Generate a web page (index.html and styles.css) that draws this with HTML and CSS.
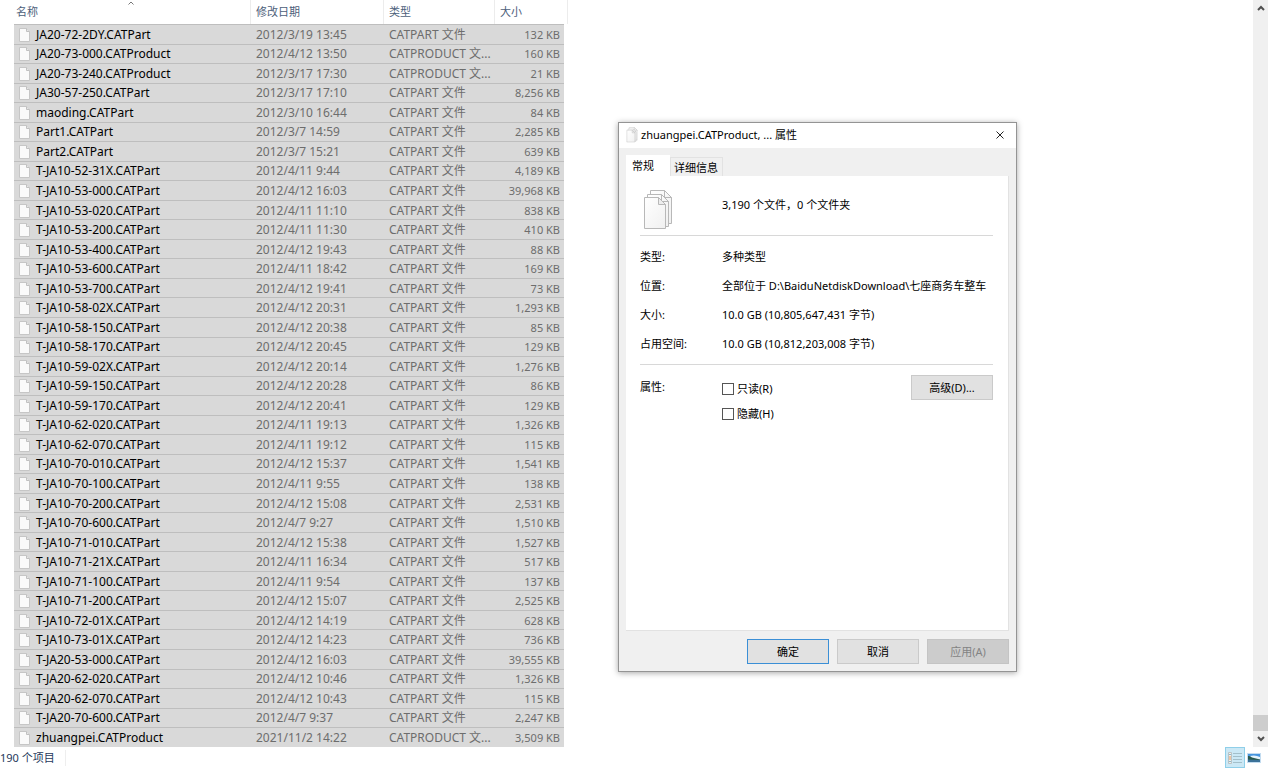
FILE: index.html
```html
<!DOCTYPE html>
<html lang="zh-CN">
<head>
<meta charset="utf-8">
<title>属性</title>
<link rel="stylesheet" href="styles.css">
</head>
<body>
<div class="explorer">
  <div class="content">
    <div class="list">
      <table class="files">
        <colgroup><col class="col-name"><col class="col-date"><col class="col-type"><col class="col-size"></colgroup>
        <thead>
          <tr>
            <th class="name" scope="col">名称<svg class="sort" viewBox="0 0 6 4"><path d="M0.5 3.5 L3 1 L5.5 3.5"/></svg></th>
            <th scope="col">修改日期</th>
            <th scope="col">类型</th>
            <th class="last" scope="col">大小</th>
          </tr>
        </thead>
        <tbody id="rows"></tbody>
      </table>
    </div>
    <div class="scrollbar">
      <button class="arrow" type="button" aria-label="向上滚动"><svg viewBox="0 0 8 6"><path d="M1 5 L4 2 L7 5"/></svg></button>
      <div class="track"><div class="thumb"></div></div>
      <button class="arrow" type="button" aria-label="向下滚动"><svg viewBox="0 0 8 6"><path d="M1 1 L4 4 L7 1"/></svg></button>
    </div>
  </div>
  <footer class="status">
    <span class="count">190 个项目</span>
    <div class="views">
      <button class="view active" type="button" aria-label="详细信息">
        <svg width="14" height="12" viewBox="0 0 14 12"><path d="M0.5 0.5h3v11h-3z" fill="#f4efe8" stroke="#b9c3c6"/><path d="M1 2.5h2M1 9.5h2" stroke="#8fb7c9"/><path d="M1 5h2M1 7h2" stroke="#e39a63"/><path d="M5 1.5h9M5 4.5h9M5 7.5h9M5 10.5h9" stroke="#a3bfca"/></svg>
      </button>
      <button class="view" type="button" aria-label="大缩略图">
        <svg width="14" height="10" viewBox="0 0 14 10"><path d="M0 0h14v10H0z" fill="#c3dcf0"/><path d="M1 1h12v3H1z" fill="#4795de"/><path d="M3 3q4-1 7 0l3 1v2H5z" fill="#e5f3fb"/><path d="M1 3q2-.5 4 1.500l8 2V7H1z" fill="#29594d"/><path d="M1 6.500l12 .5v2H1z" fill="#3c7298"/></svg>
      </button>
    </div>
  </footer>
</div>

<section class="dialog" role="dialog" aria-labelledby="dialog-title">
  <header class="titlebar">
    <svg class="title-icon" viewBox="0 0 36 42"><use href="#pages"/></svg>
    <h1 class="title" id="dialog-title">zhuangpei.CATProduct, ... 属性</h1>
    <button class="close" type="button" aria-label="关闭"><svg viewBox="0 0 8 8"><path d="M0.500 0.500 L7.500 7.500 M7.500 0.500 L0.500 7.500"/></svg></button>
  </header>
  <div class="dialog-body">
    <div class="tabs" role="tablist">
      <button class="tab selected" type="button" role="tab" aria-selected="true">常规</button>
      <button class="tab" type="button" role="tab" aria-selected="false">详细信息</button>
    </div>
    <div class="panel" role="tabpanel">
      <div class="summary">
        <svg class="pages-icon" viewBox="0 0 36 42">
          <defs>
            <linearGradient id="paper" x1="0" y1="0" x2="1" y2="1"><stop offset="0" stop-color="#fff"/><stop offset="1" stop-color="#f0f0f0"/></linearGradient>
            <g id="pages" fill="url(#paper)" stroke="#b8b8b8" stroke-linejoin="round">
              <path d="M10.500 1.500h14l7 7v26h-21z"/>
              <path d="M24.500 1.500v7h7z"/>
              <path d="M7.500 5.500h14l7 7v25h-21z"/>
              <path d="M21.500 5.500v7h7z"/>
              <path d="M4.500 8.500h14l7 7v24h-21z"/>
              <path d="M18.500 8.500v7h7z" fill="#ededed"/>
            </g>
          </defs>
          <use href="#pages"/>
        </svg>
        <span>3,190 个文件，0 个文件夹</span>
      </div>
      <dl class="details">
        <dt>类型:</dt><dd>多种类型</dd>
        <dt>位置:</dt><dd>全部位于 D:\BaiduNetdiskDownload\七座商务车整车</dd>
        <dt>大小:</dt><dd>10.0 GB (10,805,647,431 字节)</dd>
        <dt>占用空间:</dt><dd>10.0 GB (10,812,203,008 字节)</dd>
      </dl>
      <div class="attributes">
        <span class="attr-label">属性:</span>
        <div class="checks">
          <label class="check"><input type="checkbox">只读(R)</label>
          <label class="check"><input type="checkbox">隐藏(H)</label>
        </div>
        <button class="button" type="button">高级(D)...</button>
      </div>
    </div>
    <div class="actions">
      <button class="button primary" type="button">确定</button>
      <button class="button" type="button">取消</button>
      <button class="button" type="button" disabled>应用(A)</button>
    </div>
  </div>
</section>
<script src="files.js"></script>
</body>
</html>
```
FILE: styles.css
```css
* { box-sizing: border-box; }

body {
  margin: 0;
  background: #fff;
  color: #000;
  font: 11px/16px "Noto Sans", "Noto Sans CJK SC", sans-serif;
}

button { font: inherit; color: inherit; padding: 0; border: 0; background: none; }
svg { display: block; }

.explorer { display: flex; flex-direction: column; height: 100vh; overflow: hidden; }
.content { display: flex; flex: 1; min-height: 0; }
.list { flex: 1; min-width: 0; padding-left: 14px; }

.files { width: 550px; height: 100%; table-layout: fixed; border-collapse: separate; border-spacing: 0; }
.col-name { width: 237px; }
.col-date { width: 133px; }
.col-type { width: 111px; }
.col-size { width: 69px; }

.files th {
  position: relative;
  height: 24px;
  padding: 0 0 0 5px;
  border-right: 1px solid #ececec;
  color: #4c607a;
  font-weight: 400;
  text-align: left;
}
.files th.name { padding-left: 2px; }
.files th.last { border-right: 0; }
.files th.last::after {
  content: "";
  position: absolute;
  top: 0;
  right: -4px;
  bottom: 0;
  width: 1px;
  background: #ececec;
}
.sort { position: absolute; top: 1px; left: 114px; width: 6px; height: 4px; fill: none; stroke: #777; }

.files td {
  padding: 1px 4px 0 5px;
  border-top: 1px solid #bebebe;
  background: #d9d9d9;
  color: #6d6d6d;
  font-size: 12px;
  line-height: 16px;
  overflow: hidden;
  text-overflow: ellipsis;
  white-space: nowrap;
}
.files td.name { color: #000; }
.files td.type { padding-right: 0; }
.files td.size { font-size: 11px; text-align: right; }
.file { display: flex; align-items: center; gap: 6px; }
.file-icon { flex: none; width: 11px; height: 14px; }

.scrollbar { display: flex; flex-direction: column; width: 15px; background: #f0f0f0; }
.arrow { display: grid; place-items: center; height: 16px; }
.arrow svg { width: 8px; height: 6px; fill: none; stroke: #505050; stroke-width: 2; }
.track { display: flex; flex: 1; flex-direction: column; justify-content: flex-end; }
.thumb { height: 16px; background: #cdcdcd; }

.status { display: flex; align-items: center; justify-content: space-between; height: 21px; color: #1e395b; }
.count { padding-right: 10px; border-right: 1px solid #eee; }
.views { display: flex; align-self: stretch; padding-right: 5px; }
.view { display: grid; place-items: center; width: 18px; }
.view.active { width: 20px; border: 1px solid #8fcfe9; background: #cbe8f5; }

.dialog {
  position: absolute;
  top: 122px;
  left: 618px;
  display: flex;
  flex-direction: column;
  width: 399px;
  height: 550px;
  border: 1px solid #949494;
  background: #f0f0f0;
  box-shadow: 0 1px 6px rgba(0, 0, 0, .35);
}
.titlebar { display: flex; align-items: center; gap: 2px; height: 25px; padding: 0 12px 2px 6px; background: #fff; }
.title-icon { width: 14px; height: 16px; }
.title { flex: 1; margin: 0; font-size: 11px; font-weight: 400; }
.close { width: 8px; height: 8px; }
.close svg { width: 8px; height: 8px; fill: none; stroke: #222; }

.dialog-body { display: flex; flex: 1; flex-direction: column; padding: 7px 7px 7px 6px; }
.tabs { display: flex; align-items: flex-end; padding-left: 1px; }
.tab { height: 19px; padding: 2px 4px 0 3px; border: 1px solid #e2e2e2; border-bottom: 0; background: #f0f0f0; }
.tab.selected { height: 21px; padding: 0 16px 0 6px; border: 0; background: #fff; }
.panel { flex: 1; padding: 13px 15px 0 14px; margin-left: 1px; border: 1px solid #e2e2e2; border-width: 0 1px 1px 0; background: #fff; }
.summary { display: flex; gap: 46px; height: 47px; border-bottom: 1px solid #d8d8d8; }
.summary span { padding-top: 8px; }
.pages-icon { width: 36px; height: 42px; }

.details {
  display: grid;
  grid-template-columns: 82px 1fr;
  row-gap: 13px;
  margin: 0;
  padding: 13px 0 12px;
  border-bottom: 1px solid #d8d8d8;
}
.details dd { margin: 0; overflow: hidden; white-space: nowrap; }
.attributes { display: flex; align-items: flex-start; padding-top: 10px; }
.attr-label { width: 82px; padding-top: 4px; }
.checks { display: flex; flex: 1; flex-direction: column; gap: 9px; padding-top: 6px; }
.check { display: flex; align-items: center; gap: 3px; }
.check input { appearance: none; width: 12px; height: 12px; margin: 0; border: 1px solid #555; background: #fff; }

.button { width: 82px; height: 25px; border: 1px solid #cacaca; background: #e1e1e1; }
.button.primary { border-color: #3b8fd6; }
.button:disabled { background: #ccc; border-color: #c4c4c4; color: #838383; }
.actions { display: flex; justify-content: flex-end; gap: 8px; padding-top: 8px; }
```
FILE: files.js
```javascript
const files = `JA20-72-2DY.CATPart|2012/3/19 13:45|132
JA20-73-000.CATProduct|2012/4/12 13:50|160
JA20-73-240.CATProduct|2012/3/17 17:30|21
JA30-57-250.CATPart|2012/3/17 17:10|8,256
maoding.CATPart|2012/3/10 16:44|84
Part1.CATPart|2012/3/7 14:59|2,285
Part2.CATPart|2012/3/7 15:21|639
T-JA10-52-31X.CATPart|2012/4/11 9:44|4,189
T-JA10-53-000.CATPart|2012/4/12 16:03|39,968
T-JA10-53-020.CATPart|2012/4/11 11:10|838
T-JA10-53-200.CATPart|2012/4/11 11:30|410
T-JA10-53-400.CATPart|2012/4/12 19:43|88
T-JA10-53-600.CATPart|2012/4/11 18:42|169
T-JA10-53-700.CATPart|2012/4/12 19:41|73
T-JA10-58-02X.CATPart|2012/4/12 20:31|1,293
T-JA10-58-150.CATPart|2012/4/12 20:38|85
T-JA10-58-170.CATPart|2012/4/12 20:45|129
T-JA10-59-02X.CATPart|2012/4/12 20:14|1,276
T-JA10-59-150.CATPart|2012/4/12 20:28|86
T-JA10-59-170.CATPart|2012/4/12 20:41|129
T-JA10-62-020.CATPart|2012/4/11 19:13|1,326
T-JA10-62-070.CATPart|2012/4/11 19:12|115
T-JA10-70-010.CATPart|2012/4/12 15:37|1,541
T-JA10-70-100.CATPart|2012/4/11 9:55|138
T-JA10-70-200.CATPart|2012/4/12 15:08|2,531
T-JA10-70-600.CATPart|2012/4/7 9:27|1,510
T-JA10-71-010.CATPart|2012/4/12 15:38|1,527
T-JA10-71-21X.CATPart|2012/4/11 16:34|517
T-JA10-71-100.CATPart|2012/4/11 9:54|137
T-JA10-71-200.CATPart|2012/4/12 15:07|2,525
T-JA10-72-01X.CATPart|2012/4/12 14:19|628
T-JA10-73-01X.CATPart|2012/4/12 14:23|736
T-JA20-53-000.CATPart|2012/4/12 16:03|39,555
T-JA20-62-020.CATPart|2012/4/12 10:46|1,326
T-JA20-62-070.CATPart|2012/4/12 10:43|115
T-JA20-70-600.CATPart|2012/4/7 9:37|2,247
zhuangpei.CATProduct|2021/11/2 14:22|3,509`.split("\n").map(line => line.split("|"));

const icon = '<svg class="file-icon" viewBox="0 0 11 14"><path d="M.5 .5h7l3 3v10h-10z" fill="#fafafa" stroke="#c6c6c6"/><path d="M7.500 .5v3h3" fill="#e6e6e6" stroke="#c0c0c0"/></svg>';

document.getElementById("rows").innerHTML = files.map(([name, date, size]) => {
  const type = name.endsWith("Product") ? "CATPRODUCT 文..." : "CATPART 文件";
  return `<tr><td class="name"><div class="file">${icon}<span>${name}</span></div></td><td>${date}</td><td class="type">${type}</td><td class="size">${size} KB</td></tr>`;
}).join("");
```
